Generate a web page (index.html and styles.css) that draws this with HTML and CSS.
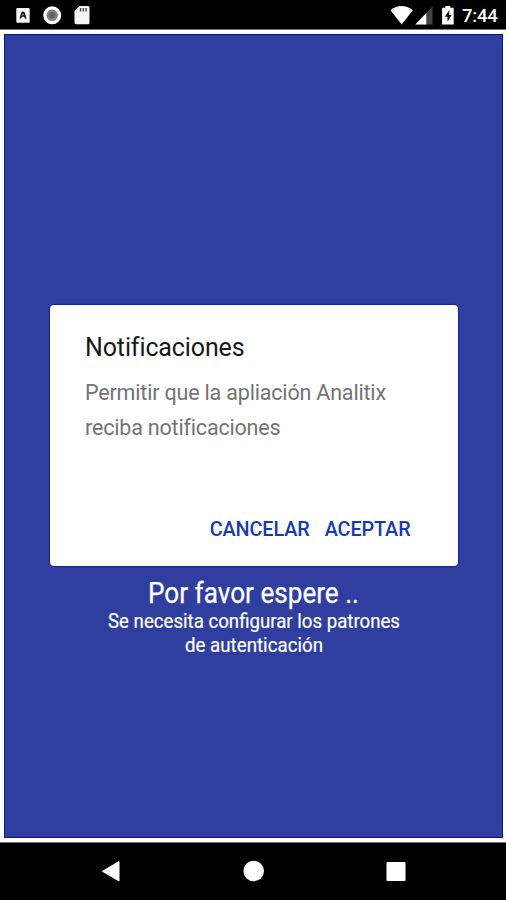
FILE: index.html
```html
<!DOCTYPE html>
<html lang="es">
<head>
<meta charset="utf-8">
<title>Analitix</title>
<link rel="stylesheet" href="styles.css">
</head>
<body>
<div class="phone">
  <header class="status">
    <svg class="status-icons" viewBox="0 0 90 29" aria-hidden="true">
      <rect x="16.300" y="8" width="13.400" height="14.800" rx="1" fill="#f4f4f4"/>
      <path d="M20.300 18.500 22.300 12.500h1.400l2 6M21.500 16h3" fill="none" stroke="#111" stroke-width="1.700"/>
      <circle cx="52.200" cy="15.300" r="7.400" fill="#858585" stroke="#fff" stroke-width="3.200"/>
      <circle cx="52.200" cy="15.300" r="3.300" fill="#626262"/>
      <path d="M79.500 6h8.500q1.500 0 1.500 1.500v15.300q0 1.500-1.500 1.500H76q-1.500 0-1.500-1.500V11z" fill="#f6f6f6"/>
      <path d="M80.500 8v3.500M83.300 8v3.500M86.100 8v3.500" stroke="#444" stroke-width="1.400"/>
    </svg>
    <svg class="status-system" viewBox="390 0 68 29" aria-hidden="true">
      <path d="M390.500 10.200Q401.500 1.800 412.800 10.200L401.700 24.500z" fill="#fff"/>
      <path d="M432.500 6.500v18h-17z" fill="#444"/>
      <path d="M426.300 13v11.500h-11z" fill="#fff"/>
      <path d="M445.300 6h5v1.700h3.400V24.500h-11.600V7.700h3.200z" fill="#fff"/>
      <path d="M449.300 10 444.800 16.700h2.700v5l4.200-6.800h-2.500z" fill="#111"/>
    </svg>
    <span class="clock">7:44</span>
  </header>
  <main class="app">
    <section class="dialog" role="dialog" aria-labelledby="title">
      <h1 class="title" id="title">Notificaciones</h1>
      <p class="message">Permitir que la apliación Analitix<br>reciba notificaciones</p>
      <div class="actions">
        <button class="action">CANCELAR</button>
        <button class="action accept">ACEPTAR</button>
      </div>
    </section>
    <svg class="waiting" viewBox="0 0 300 86">
      <text class="wait-title" x="44" y="36.500" textLength="211" lengthAdjust="spacingAndGlyphs">Por favor espere ..</text>
      <text class="wait-text" x="4" y="62" textLength="292" lengthAdjust="spacingAndGlyphs">Se necesita configurar los patrones</text>
      <text class="wait-text" x="81" y="86" textLength="138" lengthAdjust="spacingAndGlyphs">de autenticación</text>
    </svg>
  </main>
  <nav class="navigation" aria-label="Sistema">
    <svg viewBox="0 0 506 58" aria-hidden="true">
      <path d="M119 18.500v19.500L102.500 28.300z" stroke="#fff" stroke-linejoin="round"/>
      <circle cx="253.700" cy="28" r="10.300"/>
      <rect x="386.500" y="19" width="19" height="19" rx="1"/>
    </svg>
  </nav>
</div>
</body>
</html>
```

FILE: styles.css
```css
* { box-sizing: border-box; }
body { margin: 0; font-family: Roboto, sans-serif; background: #fff; }
.phone { width: 506px; height: 900px; display: flex; flex-direction: column; overflow: hidden; }
.status { height: 30px; flex: none; display: flex; background: #000; border-bottom: 1px solid #777; color: #fff; }
.status-icons { width: 90px; height: 29px; }
.status-system { width: 68px; height: 29px; margin-left: 300px; }
.clock { margin-left: 4px; font-size: 18.5px; font-weight: 500; line-height: 32px; letter-spacing: -.2px; }
.app { height: 804px; flex: none; margin: 4px 3px 4px 4px; padding: 270px 45px 0; background: #303f9f; border: 1px solid #0b168c; display: flex; flex-direction: column; align-items: flex-start; }
.dialog { width: 408px; height: 261px; flex: none; display: flex; flex-direction: column; padding: 25px 47.5px 17px 35px; background: #fff; border-radius: 4px; box-shadow: 0 0 1px 1px #10249c; }
.title { margin: 0; font-size: 25px; line-height: 36px; font-weight: 400; color: #181818; letter-spacing: -.12px; white-space: nowrap; }
.message { margin: 10px 0 0; font-size: 21.5px; line-height: 34.5px; letter-spacing: -.18px; color: #737373; white-space: nowrap; }
.actions { margin-top: auto; display: flex; justify-content: flex-end; gap: 15px; }
.action { padding: 0; border: 0; background: none; font: 500 19.8px/38px Roboto, sans-serif; letter-spacing: -.08px; color: #1939af; }
.waiting { display: block; width: 300px; height: 86px; margin-left: 54px; flex: none; fill: #fff; font-family: Roboto, sans-serif; overflow: visible; }
.wait-title { font-size: 29.5px; font-weight: 400; stroke: #fff; stroke-width: .25px; }
.wait-text { font-size: 20.5px; font-weight: 400; stroke: #fff; stroke-width: .2px; }
.navigation { height: 58px; flex: none; background: #000; border-top: 1px solid #777; }
.navigation svg { display: block; width: 506px; height: 58px; fill: #fff; }
```
